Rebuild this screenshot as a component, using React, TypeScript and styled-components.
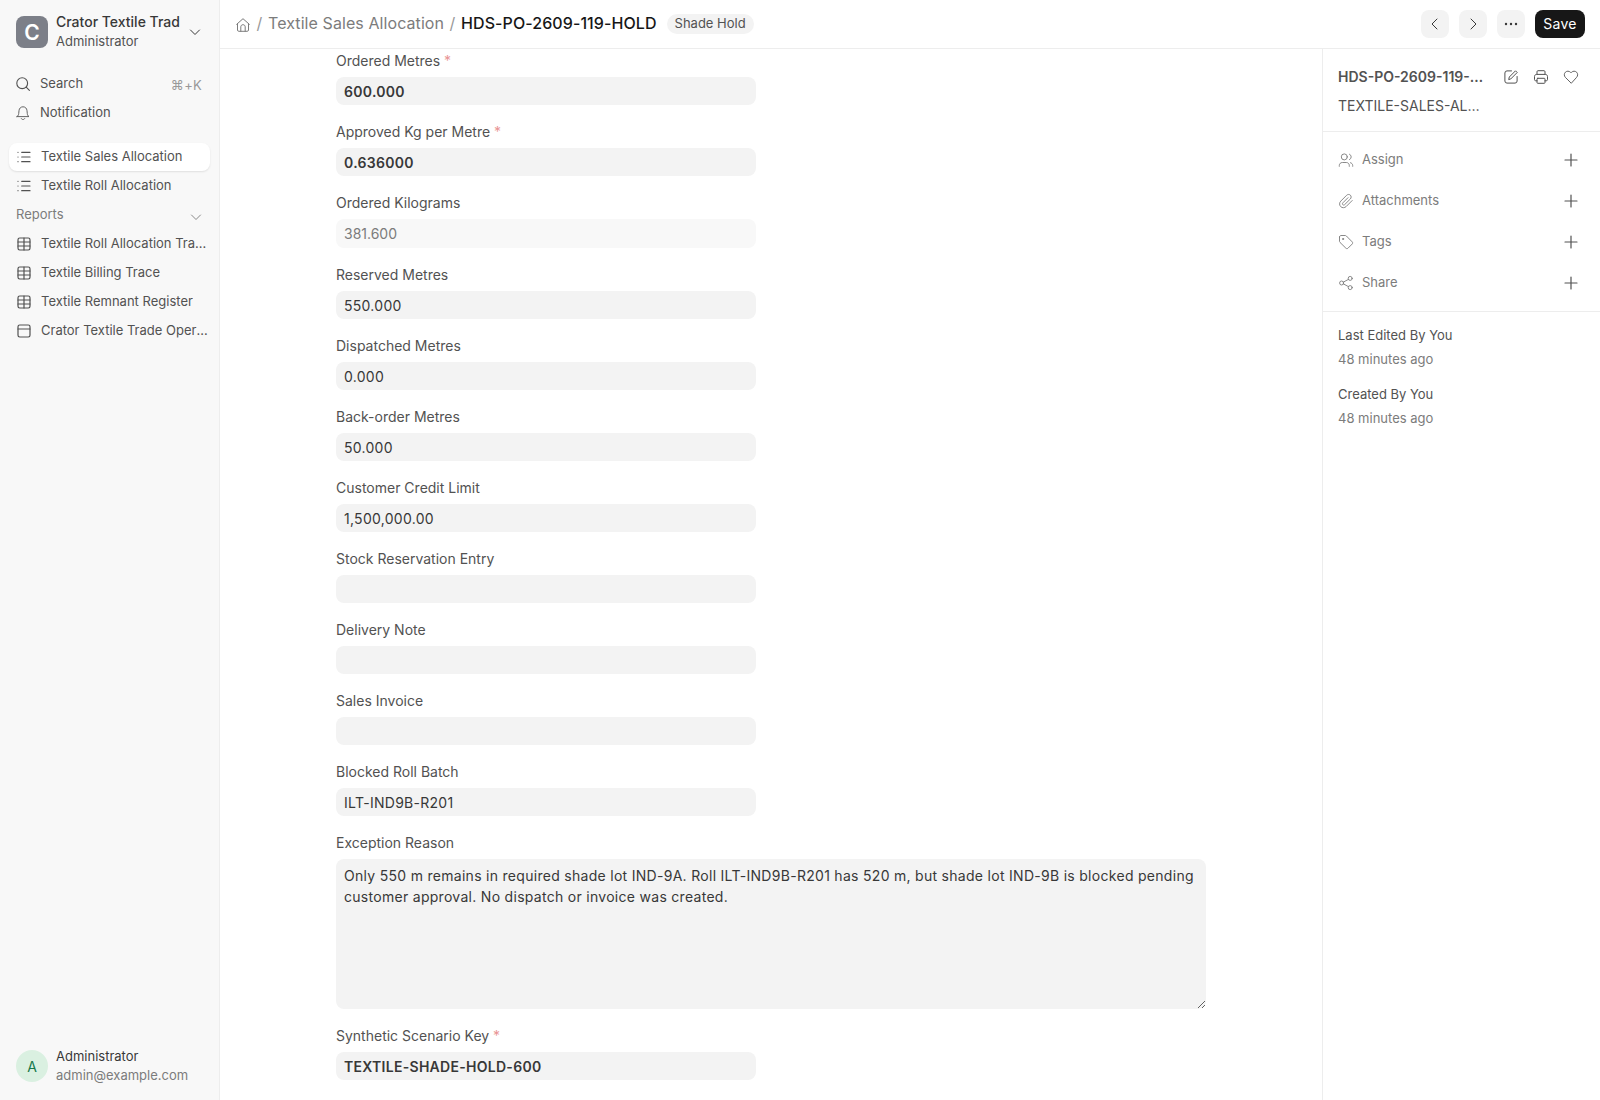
import { FC, ReactNode } from "react";
import styled, { createGlobalStyle, css } from "styled-components";

interface IField {
  label: string;
  value?: string;
  required?: boolean;
  readOnly?: boolean;
}

interface INavItem {
  label: string;
  icon: IconName;
  active?: boolean;
}

type IconName = keyof typeof icons;

const icons = {
  search: (
    <>
      <circle cx="7.2" cy="7.2" r="5.4" />
      <path d="M11.2 11.2l3.2 3.2" />
    </>
  ),
  bell: (
    <>
      <path d="M2 11.6h12c-1.1-.8-1.6-1.6-1.7-3L12 5.7C11.8 3.3 10.2 1.8 8 1.8S4.2 3.3 4 5.7l-.3 2.9c-.1 1.4-.6 2.2-1.7 3z" />
      <path d="M6.3 13.6c.4.6 1 .9 1.7.9s1.3-.3 1.7-.9" />
    </>
  ),
  list: (
    <>
      <path d="M5.7 3.3h8.3M5.7 8h8.3M5.7 12.7h8.3" />
      <path d="M2 3.3h.01M2 8h.01M2 12.7h.01" />
    </>
  ),
  table: (
    <>
      <rect x="2" y="2" width="12" height="12" rx="1.7" />
      <path d="M8 2v12M2 6h12M2 10h12" />
    </>
  ),
  panel: (
    <>
      <rect x="2" y="2" width="12" height="12" rx="1.7" />
      <path d="M2 6h12" />
    </>
  ),
  chevronDown: <path d="M3.5 6l4.5 4.5L12.5 6" />,
  chevronLeft: <path d="M10 3L5 8l5 5" />,
  chevronRight: <path d="M6 3l5 5-5 5" />,
  dots: (
    <g fill="currentColor" stroke="none">
      <circle cx="3" cy="8" r="1.2" />
      <circle cx="8" cy="8" r="1.2" />
      <circle cx="13" cy="8" r="1.2" />
    </g>
  ),
  home: (
    <>
      <path d="M1.7 7.3L8 1.7l6.3 5.6" />
      <path d="M2.5 6.8v6.2c0 .8.5 1.3 1.3 1.3h8.4c.8 0 1.3-.5 1.3-1.3V6.8" />
      <path d="M5.8 14.3V9.8C5.8 8.6 6.7 7.7 8 7.7s2.2.9 2.2 2.1v4.5" />
    </>
  ),
  edit: (
    <>
      <path d="M8.5 1.9H4A2.1 2.1 0 0 0 1.9 4v8A2.1 2.1 0 0 0 4 14.1h8a2.1 2.1 0 0 0 2.1-2.1V7.5" />
      <path d="M5.8 10.2l.5-2.2 6.2-6.2 1.7 1.7L8 9.7z" />
    </>
  ),
  print: (
    <>
      <path d="M4 5.3V2.7c0-.6.4-1 1-1h6c.6 0 1 .4 1 1v2.6" />
      <path d="M4 11.8H2.7c-.7 0-1.2-.5-1.2-1.2V7.5c0-1.2.9-2.1 2.1-2.1h8.8c1.2 0 2.1.9 2.1 2.1v3.1c0 .7-.5 1.2-1.2 1.2H12" />
      <rect x="4" y="9.3" width="8" height="5" rx=".8" />
    </>
  ),
  heart: (
    <path d="M8 14L2.4 8.4C.9 6.9 1 4.6 2.4 3.2s3.7-1.3 5.1.1l.5.5.5-.5c1.4-1.4 3.7-1.5 5.1-.1s1.5 3.7 0 5.2z" />
  ),
  assign: (
    <>
      <circle cx="6.3" cy="4.9" r="3" />
      <path d="M1.3 14.3v-.8c0-1.7 1.3-3 3-3h4c1.7 0 3 1.3 3 3v.8" />
      <path d="M11.5 2.2a3 3 0 0 1 0 5.4M12.5 10.7c1.3.4 2.2 1.5 2.2 2.8v.8" />
    </>
  ),
  attach: (
    <path d="M14.2 7.5l-6 6c-1.6 1.6-4 1.6-5.5.1s-1.5-3.9.1-5.5l5.8-5.8c1.1-1.1 2.8-1.1 3.8-.1s1 2.7-.1 3.8l-5.6 5.6c-.6.6-1.4.6-1.9.1s-.5-1.3.1-1.9l5.1-5.1" />
  ),
  tag: (
    <>
      <path d="M1.5 3v4.3c0 .4.2.8.5 1.1l5.9 5.8c.6.6 1.5.6 2.1 0l4.2-4.2c.6-.6.6-1.5 0-2.1L8.4 2c-.3-.3-.7-.5-1.1-.5H3C2.2 1.5 1.5 2.2 1.5 3z" />
      <circle cx="5" cy="5" r=".6" />
    </>
  ),
  share: (
    <>
      <circle cx="3.6" cy="8" r="2" />
      <circle cx="12.2" cy="3.4" r="2" />
      <circle cx="12.2" cy="12.6" r="2" />
      <path d="M5.4 7.1l5-2.7M5.4 8.9l5 2.7" />
    </>
  ),
  plus: <path d="M8 2v12M2 8h12" />,
};

const Icon: FC<{ name: IconName; size?: number; weight?: number }> = ({
  name,
  size = 16,
  weight = 1,
}) => (
  <IconSvg
    width={size}
    height={size}
    viewBox="0 0 16 16"
    fill="none"
    stroke="currentColor"
    strokeWidth={weight}
    strokeLinecap="round"
    strokeLinejoin="round"
  >
    {icons[name]}
  </IconSvg>
);

const lists: INavItem[] = [
  { label: "Textile Sales Allocation", icon: "list", active: true },
  { label: "Textile Roll Allocation", icon: "list" },
];

const reports: INavItem[] = [
  { label: "Textile Roll Allocation Trace", icon: "table" },
  { label: "Textile Billing Trace", icon: "table" },
  { label: "Textile Remnant Register", icon: "table" },
  { label: "Crator Textile Trade Operations", icon: "panel" },
];

const fields: IField[] = [
  { label: "Ordered Metres", value: "600.000", required: true },
  { label: "Approved Kg per Metre", value: "0.636000", required: true },
  { label: "Ordered Kilograms", value: "381.600", readOnly: true },
  { label: "Reserved Metres", value: "550.000" },
  { label: "Dispatched Metres", value: "0.000" },
  { label: "Back-order Metres", value: "50.000" },
  { label: "Customer Credit Limit", value: "1,500,000.00" },
  { label: "Stock Reservation Entry" },
  { label: "Delivery Note" },
  { label: "Sales Invoice" },
  { label: "Blocked Roll Batch", value: "ILT-IND9B-R201" },
];

const actions: { label: string; icon: IconName }[] = [
  { label: "Assign", icon: "assign" },
  { label: "Attachments", icon: "attach" },
  { label: "Tags", icon: "tag" },
  { label: "Share", icon: "share" },
];

const exceptionReason =
  "Only 550 m remains in required shade lot IND-9A. Roll ILT-IND9B-R201 has 520 m, but shade lot IND-9B is blocked pending customer approval. No dispatch or invoice was created.";

const Field: FC<{ label: string; required?: boolean; children: ReactNode }> = ({
  label,
  required,
  children,
}) => (
  <FieldDiv>
    <FieldLabel>
      {label}
      {required && <RequiredSpan> *</RequiredSpan>}
    </FieldLabel>
    {children}
  </FieldDiv>
);

const NavItem: FC<INavItem> = ({ label, icon, active }) => (
  <NavItemA $active={active}>
    <Icon name={icon} weight={1.2} />
    <RowTextSpan>{label}</RowTextSpan>
  </NavItemA>
);

const Sidebar: FC = () => (
  <SidebarAside>
    <WorkspaceDiv>
      <LogoDiv>C</LogoDiv>
      <WorkspaceTextDiv>
        <WorkspaceTitleDiv>Crator Textile Trad</WorkspaceTitleDiv>
        <WorkspaceUserDiv>Administrator</WorkspaceUserDiv>
      </WorkspaceTextDiv>
      <Icon name="chevronDown" />
    </WorkspaceDiv>
    <ShortcutsDiv>
      <ShortcutA>
        <Icon name="search" weight={1.1} />
        <RowTextSpan>Search</RowTextSpan>
        <ShortcutKeySpan>⌘+K</ShortcutKeySpan>
      </ShortcutA>
      <ShortcutA>
        <Icon name="bell" weight={0.9} />
        <RowTextSpan>Notification</RowTextSpan>
      </ShortcutA>
    </ShortcutsDiv>
    <NavListNav>
      {lists.map((item) => (
        <NavItem key={item.label} {...item} />
      ))}
      <NavHeadingDiv>
        <RowTextSpan>Reports</RowTextSpan>
        <Icon name="chevronDown" weight={0.9} />
      </NavHeadingDiv>
      {reports.map((item) => (
        <NavItem key={item.label} {...item} />
      ))}
    </NavListNav>
    <UserDiv>
      <AvatarDiv>A</AvatarDiv>
      <UserTextDiv>
        <UserNameDiv>Administrator</UserNameDiv>
        <UserMailDiv>admin@example.com</UserMailDiv>
      </UserTextDiv>
    </UserDiv>
  </SidebarAside>
);

const Header: FC = () => (
  <HeaderBar>
    <BreadcrumbsDiv>
      <Icon name="home" />
      <SlashSpan>/</SlashSpan>
      <span>Textile Sales Allocation</span>
      <SlashSpan>/</SlashSpan>
      <CurrentSpan>HDS-PO-2609-119-HOLD</CurrentSpan>
      <StatusSpan>Shade Hold</StatusSpan>
    </BreadcrumbsDiv>
    <HeaderActionsDiv>
      <IconButton aria-label="Previous">
        <Icon name="chevronLeft" />
      </IconButton>
      <IconButton aria-label="Next">
        <Icon name="chevronRight" />
      </IconButton>
      <IconButton aria-label="Menu">
        <Icon name="dots" />
      </IconButton>
      <SaveButton>Save</SaveButton>
    </HeaderActionsDiv>
  </HeaderBar>
);

const DetailsPanel: FC = () => (
  <DetailsAside>
    <DetailsHeadDiv>
      <DetailsNameDiv>
        <DetailsTitleDiv>HDS-PO-2609-119-HOLD</DetailsTitleDiv>
        <DetailsIdDiv>TEXTILE-SALES-ALLOCATION</DetailsIdDiv>
      </DetailsNameDiv>
      <DetailsIconsDiv>
        <Icon name="edit" />
        <Icon name="print" />
        <Icon name="heart" weight={0.9} />
      </DetailsIconsDiv>
    </DetailsHeadDiv>
    <ActionsDiv>
      {actions.map(({ label, icon }) => (
        <ActionDiv key={label}>
          <Icon name={icon} weight={0.9} />
          <RowTextSpan>{label}</RowTextSpan>
          <AddButton aria-label={`Add ${label}`}>
            <Icon name="plus" weight={1.2} />
          </AddButton>
        </ActionDiv>
      ))}
    </ActionsDiv>
    <HistoryDiv>
      <HistoryItemDiv>
        Last Edited By You
        <TimeSpan>48 minutes ago</TimeSpan>
      </HistoryItemDiv>
      <HistoryItemDiv>
        Created By You
        <TimeSpan>48 minutes ago</TimeSpan>
      </HistoryItemDiv>
    </HistoryDiv>
  </DetailsAside>
);

const App: FC = () => (
  <>
    <GlobalStyle />
    <PageDiv>
      <Sidebar />
      <ContentDiv>
        <Header />
        <BodyDiv>
          <FormMain>
            {fields.map(({ label, value, required, readOnly }) => (
              <Field key={label} label={label} required={required}>
                {readOnly ? (
                  <ReadOnlyDiv>{value}</ReadOnlyDiv>
                ) : (
                  <TextInput defaultValue={value} $bold={required} />
                )}
              </Field>
            ))}
            <Field label="Exception Reason">
              <TextArea defaultValue={exceptionReason} spellCheck={false} />
            </Field>
            <Field label="Synthetic Scenario Key" required>
              <TextInput defaultValue="TEXTILE-SHADE-HOLD-600" $bold />
            </Field>
          </FormMain>
          <DetailsPanel />
        </BodyDiv>
      </ContentDiv>
    </PageDiv>
  </>
);

export default App;

const GlobalStyle = createGlobalStyle`
  * {
    box-sizing: border-box;
  }
  body {
    margin: 0;
    overflow: hidden;
    background: #fff;
    color: #383838;
    font-family: Inter, "Liberation Sans", sans-serif;
    font-size: 14px;
    line-height: 21px;
  }
  button, input, textarea {
    font: inherit;
    border: none;
    outline: none;
  }
`;

const ellipsis = css`
  overflow: hidden;
  text-overflow: ellipsis;
  white-space: nowrap;
`;

const IconSvg = styled.svg`
  display: block;
  flex: none;
`;

const RowTextSpan = styled.span`
  ${ellipsis}
  margin-bottom: 2px;
`;

const PageDiv = styled.div`
  display: flex;
  height: 1100px;
`;

const SidebarAside = styled.aside`
  display: flex;
  flex-direction: column;
  flex: none;
  width: 220px;
  padding: 12px 9px 14px 8px;
  background: #f8f8f8;
  border-right: 1px solid #ededed;
`;

const WorkspaceDiv = styled.div`
  display: flex;
  align-items: center;
  height: 40px;
  padding: 0 0 0 8px;
  & > svg {
    margin-right: 7px;
  }
`;

const LogoDiv = styled.div`
  display: flex;
  align-items: center;
  justify-content: center;
  flex: none;
  width: 32px;
  height: 32px;
  border-radius: 8px;
  background: #7c7f88;
  color: #fff;
  font-size: 21px;
  font-weight: 600;
`;

const WorkspaceTextDiv = styled.div`
  flex: 1;
  min-width: 0;
  margin-left: 8px;
  padding-bottom: 2px;
`;

const WorkspaceTitleDiv = styled.div`
  height: 20px;
  line-height: 20px;
  font-weight: 500;
  white-space: nowrap;
`;

const WorkspaceUserDiv = styled.div`
  font-size: 13px;
  line-height: 19px;
  color: #525252;
`;

const ShortcutsDiv = styled.div`
  display: flex;
  flex-direction: column;
  gap: 1px;
  margin-top: 18px;
`;

const ShortcutA = styled.a`
  display: flex;
  align-items: center;
  gap: 9px;
  height: 28px;
  padding: 0 8px 0 7px;
  font-size: 13px;
  color: #525252;
`;

const ShortcutKeySpan = styled.span`
  margin: 3px 0 0 auto;
  letter-spacing: 0.02em;
  color: #999;
`;

const NavListNav = styled.nav`
  display: flex;
  flex-direction: column;
  gap: 1px;
  flex: 1;
  margin-top: 16px;
  padding-left: 1px;
`;

const NavItemA = styled.a<{ $active?: boolean }>`
  display: flex;
  align-items: center;
  gap: 9px;
  height: 28px;
  padding: 0 1px 0 7px;
  border-radius: 8px;
  font-size: 13px;
  color: #525252;
  background: ${({ $active }) => ($active ? "#fff" : "transparent")};
  box-shadow: ${({ $active }) =>
    $active ? "0 1px 2px rgba(0, 0, 0, 0.1)" : "none"};
`;

const NavHeadingDiv = styled.div`
  display: flex;
  align-items: center;
  justify-content: space-between;
  height: 28px;
  padding: 0 6px 0 7px;
  font-size: 13px;
  color: #7c7c7c;
  & svg {
    margin-top: 3px;
  }
`;

const UserDiv = styled.div`
  display: flex;
  align-items: center;
  gap: 8px;
  height: 40px;
  padding-left: 8px;
`;

const AvatarDiv = styled.div`
  display: flex;
  align-items: center;
  justify-content: center;
  width: 32px;
  height: 32px;
  border-radius: 50%;
  background: #daf0e1;
  color: #16794c;
`;

const UserTextDiv = styled.div`
  font-size: 13px;
  line-height: 19px;
`;

const UserNameDiv = styled.div`
  color: #383838;
`;

const UserMailDiv = styled.div`
  color: #7c7c7c;
`;

const ContentDiv = styled.div`
  display: flex;
  flex-direction: column;
  flex: 1;
  min-width: 0;
`;

const HeaderBar = styled.header`
  display: flex;
  align-items: center;
  justify-content: space-between;
  flex: none;
  height: 49px;
  padding: 0 15px;
  border-bottom: 1px solid #ededed;
`;

const BreadcrumbsDiv = styled.div`
  display: flex;
  align-items: center;
  padding-bottom: 2px;
  font-size: 16px;
  letter-spacing: 0.005em;
  color: #7c7c7c;
  & svg {
    margin-top: 4px;
  }
`;

const SlashSpan = styled.span`
  width: 17px;
  text-align: center;
  color: #999;
`;

const CurrentSpan = styled.span`
  font-weight: 500;
  color: #171717;
`;

const StatusSpan = styled.span`
  height: 20px;
  margin: 2px 0 0 10px;
  padding: 0 8px;
  border-radius: 10px;
  background: #f3f3f3;
  color: #525252;
  font-size: 13px;
  line-height: 18px;
  letter-spacing: 0;
`;

const HeaderActionsDiv = styled.div`
  display: flex;
  gap: 10px;
`;

const IconButton = styled.button`
  display: flex;
  align-items: center;
  justify-content: center;
  width: 28px;
  height: 28px;
  padding: 0;
  border-radius: 8px;
  background: #f3f3f3;
  color: #383838;
`;

const SaveButton = styled.button`
  width: 50px;
  height: 28px;
  padding: 0 0 2px;
  border-radius: 8px;
  background: #171717;
  color: #fff;
  letter-spacing: 0.02em;
`;

const BodyDiv = styled.div`
  display: flex;
  flex: 1;
  min-height: 0;
`;

const FormMain = styled.main`
  flex: 1;
  overflow: hidden;
  padding: 1px 116px 0;
`;

const FieldDiv = styled.div`
  margin-bottom: 16px;
`;

const FieldLabel = styled.label`
  display: block;
  margin-bottom: 6px;
  color: #525252;
`;

const RequiredSpan = styled.span`
  color: #e99595;
`;

const TextInput = styled.input<{ $bold?: boolean }>`
  display: block;
  width: 420px;
  height: 28px;
  padding: 0 8px;
  border-radius: 8px;
  background: #f3f3f3;
  color: #383838;
  font-weight: ${({ $bold }) => ($bold ? 600 : 400)};
  letter-spacing: 0.02em;
`;

const ReadOnlyDiv = styled.div`
  width: 420px;
  height: 29px;
  padding: 4px 8px;
  border-radius: 8px;
  background: #f8f8f8;
  color: #7c7c7c;
`;

const TextArea = styled.textarea`
  display: block;
  width: 100%;
  height: 150px;
  padding: 6px 8px;
  border-radius: 8px;
  background: #f3f3f3;
  color: #383838;
  letter-spacing: 0.29px;
  resize: vertical;
`;

const DetailsAside = styled.aside`
  flex: none;
  width: 278px;
  border-left: 1px solid #ededed;
`;

const DetailsHeadDiv = styled.div`
  display: flex;
  justify-content: space-between;
  height: 83px;
  padding: 17px 21px 0 15px;
  border-bottom: 1px solid #ededed;
`;

const DetailsNameDiv = styled.div`
  width: 146px;
  color: #525252;
`;

const DetailsTitleDiv = styled.div`
  ${ellipsis}
  font-weight: 600;
`;

const DetailsIdDiv = styled.div`
  ${ellipsis}
  margin-top: 8px;
`;

const DetailsIconsDiv = styled.div`
  display: flex;
  gap: 14px;
  padding-top: 3px;
  color: #525252;
`;

const ActionsDiv = styled.div`
  display: flex;
  flex-direction: column;
  gap: 13px;
  height: 180px;
  padding: 14px 21px 0 15px;
  border-bottom: 1px solid #ededed;
`;

const ActionDiv = styled.div`
  display: flex;
  align-items: center;
  gap: 8px;
  height: 28px;
  font-size: 13px;
  color: #7c7c7c;
`;

const AddButton = styled.button`
  margin-left: auto;
  padding: 0;
  background: none;
  color: #525252;
`;

const HistoryDiv = styled.div`
  display: flex;
  flex-direction: column;
  gap: 11px;
  padding: 11px 15px;
`;

const HistoryItemDiv = styled.div`
  font-size: 13px;
  line-height: 24px;
  color: #525252;
`;

const TimeSpan = styled.span`
  display: block;
  color: #7c7c7c;
`;
